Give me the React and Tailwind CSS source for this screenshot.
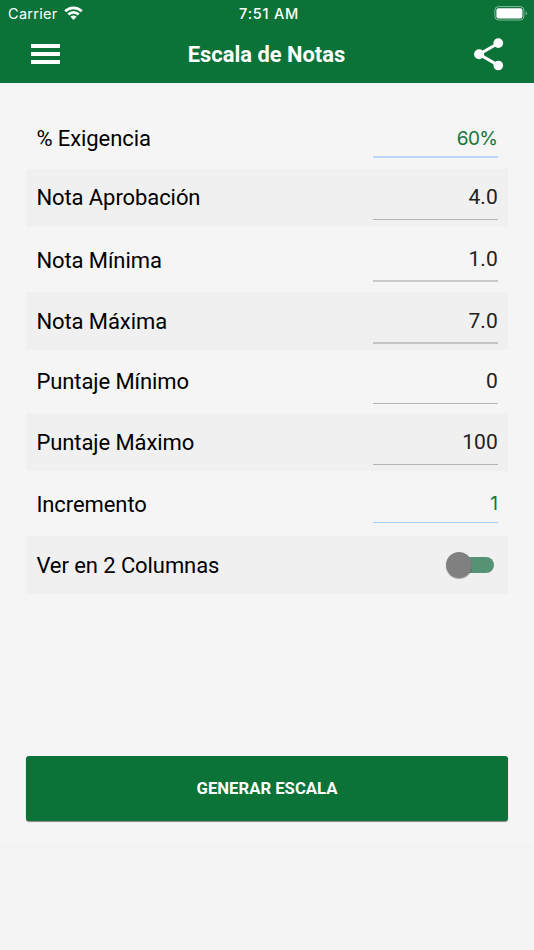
const rows = [
  { label: '% Exigencia', value: '60%', accent: true, row: 'h-[61px]', labelPad: 'pt-[18px]', field: 'pt-[18px] h-[50px]', line: 'border-b-2 border-[#b9d8fd]' },
  { label: 'Nota Aprobación', value: '4.0', row: 'h-[58px] bg-[#f0f0f0]', labelPad: 'pt-[16px]', field: 'pt-[15px] h-[51px]', line: 'border-b border-[#b4b4b4]' },
  { label: 'Nota Mínima', value: '1.0', row: 'h-[65px]', labelPad: 'pt-[21px]', field: 'pt-[19px] h-[55px]', line: 'border-b-2 border-[#c8c8c8]' },
  { label: 'Nota Máxima', value: '7.0', row: 'h-[58px] bg-[#f0f0f0]', labelPad: 'pt-[17px]', field: 'pt-[16px] h-[52px]', line: 'border-b-2 border-[#c4c4c4]' },
  { label: 'Puntaje Mínimo', value: '0', row: 'h-[63px]', labelPad: 'pt-[19px]', field: 'pt-[18px] h-[54px]', line: 'border-b border-[#b4b4b4]' },
  { label: 'Puntaje Máximo', value: '100', row: 'h-[58px] bg-[#f0f0f0]', labelPad: 'pt-[17px]', field: 'pt-[16px] h-[52px]', line: 'border-b border-[#b4b4b4]' },
  { label: 'Incremento', value: '1', accent: true, row: 'h-[65px]', labelPad: 'pt-[21px]', field: 'pt-[20px] h-[52px]', line: 'border-b border-[#a4cffb]' },
];

function Wifi() {
  return (
    <svg className="mt-[6px] ml-[6px] h-[14px] w-[19px]" viewBox="0 0 19 14" fill="none" stroke="#fff" strokeWidth="2.7">
      <path d="M1.2 5.2a11.8 11.8 0 0 1 16.6 0" />
      <path d="M4.3 8.5a7.4 7.4 0 0 1 10.4 0" />
      <path d="M9.5 13.9 6.4 10.8a4.4 4.4 0 0 1 6.2 0Z" fill="#fff" stroke="none" />
    </svg>
  );
}

function Battery() {
  return (
    <svg className="mt-[6px] h-[15px] w-[34px]" viewBox="0 0 34 15">
      <rect x="0.9" y="0.6" width="29" height="13.4" rx="3.6" fill="none" stroke="#fff" strokeOpacity="0.5" strokeWidth="1" />
      <rect x="2.4" y="2.2" width="26" height="10.2" rx="2" fill="#fff" />
      <path d="M31.6 5.2v4.2c1.8-.7 1.8-3.5 0-4.2Z" fill="#fff" fillOpacity="0.5" />
    </svg>
  );
}

export default function App() {
  return (
    <div className="flex h-[950px] w-[534px] flex-col bg-[#f3f3f3] font-[Roboto,sans-serif]">
      <header className="h-[83px] bg-[#0b7238] text-white">
        <div className="grid h-[28px] grid-cols-3 font-[Inter,sans-serif] text-[14.5px] leading-[28px]">
          <div className="flex pl-[8px]">
            <span className="tracking-[0.3px]">Carrier</span>
            <Wifi />
          </div>
          <div className="pl-[4px] text-center font-medium tracking-[0.75px]">7:51 AM</div>
          <div className="flex justify-end pr-[6px]"><Battery /></div>
        </div>
        <div className="flex h-[54px] items-center justify-between pr-[29px] pl-[31px]">
          <button className="mb-[2px] flex w-[29px] flex-col gap-1" aria-label="Menú">
            <span className="h-1 bg-white" />
            <span className="h-1 bg-white" />
            <span className="h-1 bg-white" />
          </button>
          <h1 className="pr-px text-[21.9px] leading-[26px] font-bold">Escala de Notas</h1>
          <svg className="h-[34px] w-[31px]" viewBox="0 0 31 34" fill="#fff" stroke="#fff">
            <path d="M24.3 5.2 5.2 16.3l19.1 11.1" fill="none" strokeWidth="3" />
            <circle cx="24.3" cy="5.1" r="4.9" stroke="none" />
            <circle cx="5.1" cy="16.3" r="5" stroke="none" />
            <circle cx="24.3" cy="27.5" r="4.8" stroke="none" />
          </svg>
        </div>
      </header>

      <main className="flex h-[762px] flex-col bg-[#f5f5f5] px-[26px] pt-[25px]">
        {rows.map((r) => (
          <div key={r.label} className={`flex justify-between pr-[10px] pl-[10.4px] ${r.row}`}>
            <span className={`text-[22px] leading-[26px] tracking-[-0.08px] text-black ${r.labelPad}`}>{r.label}</span>
            <div className={`w-[125px] text-right leading-[26px] ${r.field} ${r.line} ${r.accent ? 'pr-[0.6px] font-[Inter,sans-serif] text-[19px] tracking-[-0.6px] text-[#12763b]' : 'pr-[0.3px] text-[21px] text-[#212121]'}`}>
              {r.value}
            </div>
          </div>
        ))}
        <div className="flex h-[58px] items-center justify-between bg-[#f0f0f0] pr-[14px] pl-[10.4px]">
          <span className="pt-[2px] text-[22px] leading-[26px] tracking-[-0.08px] text-black">Ver en 2 Columnas</span>
          <div className="flex h-[16px] w-[43px] items-center rounded-full bg-[#569374]">
            <span className="-ml-[5px] size-[26px] shrink-0 rounded-full bg-[#808080] shadow-[0_1px_1px_rgba(0,0,0,0.3)]" />
          </div>
        </div>
        <button className="mt-[162px] h-[65px] rounded-[3px] bg-[#0b7238] text-[16.7px] font-bold text-white shadow-[0_1px_1px_rgba(0,0,0,0.45)]">
          GENERAR ESCALA
        </button>
      </main>
    </div>
  );
}
